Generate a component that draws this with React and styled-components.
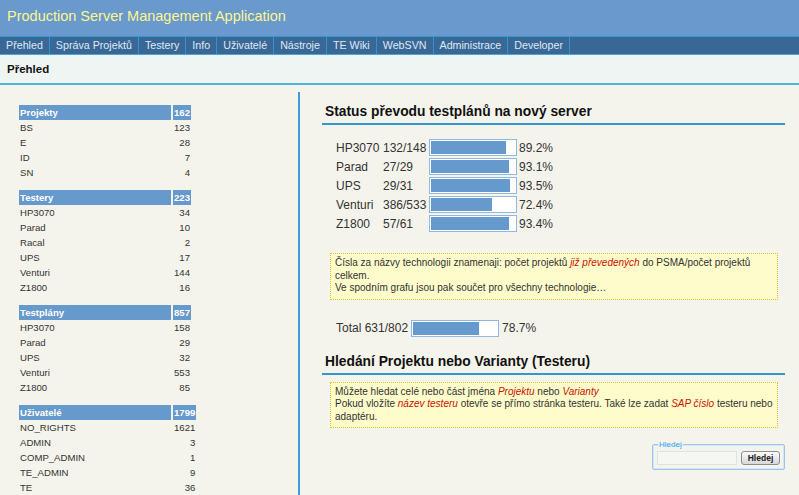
import styled, { createGlobalStyle } from "styled-components";

const GlobalStyle = createGlobalStyle`
  html, body {
    margin: 0;
    padding: 0;
  }
  body {
    background: #f5f4ec;
    font-family: "Liberation Sans", Arial, sans-serif;
    color: #333;
  }
`;

const menu = [
  "Přehled",
  "Správa Projektů",
  "Testery",
  "Info",
  "Uživatelé",
  "Nástroje",
  "TE Wiki",
  "WebSVN",
  "Administrace",
  "Developer",
];

const stats = [
  {
    title: "Projekty",
    total: 162,
    rows: [["BS", 123], ["E", 28], ["ID", 7], ["SN", 4]],
  },
  {
    title: "Testery",
    total: 223,
    rows: [["HP3070", 34], ["Parad", 10], ["Racal", 2], ["UPS", 17], ["Venturi", 144], ["Z1800", 16]],
  },
  {
    title: "Testplány",
    total: 857,
    rows: [["HP3070", 158], ["Parad", 29], ["UPS", 32], ["Venturi", 553], ["Z1800", 85]],
  },
  {
    title: "Uživatelé",
    total: 1799,
    rows: [["NO_RIGHTS", 1621], ["ADMIN", 3], ["COMP_ADMIN", 1], ["TE_ADMIN", 9], ["TE", 36]],
  },
];

const progress = [
  ["HP3070", "132/148", 89.2],
  ["Parad", "27/29", 93.1],
  ["UPS", "29/31", 93.5],
  ["Venturi", "386/533", 72.4],
  ["Z1800", "57/61", 93.4],
];

const ProgressBar = ({ value }) => (
  <Bar>
    <Fill style={{ width: `${value}%` }} />
  </Bar>
);

const App = () => {
  return (
    <Page>
      <GlobalStyle />
      <Header>
        <Title>Production Server Management Application</Title>
      </Header>
      <Nav>
        {menu.map((item) => (
          <NavItem key={item}>{item}</NavItem>
        ))}
      </Nav>
      <SubHeader>Přehled</SubHeader>

      <Main>
        <LeftColumn>
          {stats.map((table) => (
            <StatTable key={table.title}>
              <HeadCell>{table.title}</HeadCell>
              <HeadCell $num>{table.total}</HeadCell>
              {table.rows.map(([name, count]) => (
                <Row key={name}>
                  <Cell>{name}</Cell>
                  <Cell $num>{count}</Cell>
                </Row>
              ))}
            </StatTable>
          ))}
        </LeftColumn>

        <RightColumn>
          <SectionTitle>Status převodu testplánů na nový server</SectionTitle>
          <ProgressGrid>
            {progress.map(([name, ratio, pct]) => (
              <Row key={name}>
                <span>{name}</span>
                <span>{ratio}</span>
                <ProgressBar value={pct} />
                <Pct>{pct}%</Pct>
              </Row>
            ))}
          </ProgressGrid>

          <Note $top={21}>
            Čísla za názvy technologii znamenaji: počet projektů <Em>již převedených</Em> do
            PSMA/počet projektů celkem.
            <br />
            Ve spodním grafu jsou pak součet pro všechny technologie…
          </Note>

          <TotalRow>
            <span>Total 631/802</span>
            <ProgressBar value={78.7} />
            <span>78.7%</span>
          </TotalRow>

          <SectionTitle $top={17}>Hledání Projektu nebo Varianty (Testeru)</SectionTitle>
          <Note $top={7}>
            Můžete hledat celé nebo část jména <Em>Projektu</Em> nebo <Em>Varianty</Em>
            <br />
            Pokud vložíte <Em>název testeru</Em> otevře se přímo stránka testeru. Také lze zadat{" "}
            <Em>SAP číslo</Em> testeru nebo adaptéru.
          </Note>

          <SearchWrap>
            <SearchBox>
              <Legend>Hledej</Legend>
              <SearchInput type="text" />
              <SearchButton type="button">Hledej</SearchButton>
            </SearchBox>
          </SearchWrap>
        </RightColumn>
      </Main>
    </Page>
  );
};

export default App;

const Page = styled.div`
  display: flex;
  flex-direction: column;
  min-height: 100vh;
`;

const Header = styled.div`
  height: 36px;
  background: #6999cd;
  display: flex;
  align-items: center;
  padding-left: 7px;
`;

const Title = styled.div`
  color: #fbf68e;
  font-size: 14.5px;
  margin-top: -4px;
`;

const Nav = styled.div`
  display: flex;
  height: 17px;
  background: #3a6896;
  border-top: 1px solid #3399cc;
  border-bottom: 1px solid #4aa6d6;
`;

const NavItem = styled.div`
  padding: 0 6px;
  border-right: 1px solid #2f95cc;
  color: #dde9f5;
  font-size: 10.7px;
  line-height: 17px;
  white-space: nowrap;
`;

const SubHeader = styled.div`
  height: 28px;
  line-height: 28px;
  padding-left: 7px;
  background: #eef5f2;
  border-bottom: 2px solid #4fb3e0;
  font-size: 11.5px;
  font-weight: bold;
  color: #111;
`;

const Main = styled.div`
  flex: 1;
  display: flex;
  padding-top: 7px;
`;

const LeftColumn = styled.div`
  width: 300px;
  flex-shrink: 0;
  box-sizing: border-box;
  padding: 13px 0 0 19px;
  border-right: 2px solid #3a9fdd;
`;

const StatTable = styled.div`
  display: grid;
  grid-template-columns: 152px auto;
  grid-auto-rows: 15px;
  column-gap: 2px;
  justify-content: start;
  margin-bottom: 10px;
  font-size: 9.6px;
  line-height: 15px;
`;

const Row = styled.div`
  display: contents;
`;

const HeadCell = styled.div`
  background: #6699cc;
  color: #fff;
  font-weight: bold;
  padding: 0 1px;
  text-align: ${(p) => (p.$num ? "right" : "left")};
`;

const Cell = styled.div`
  padding: 0 1px;
  color: #333;
  text-align: ${(p) => (p.$num ? "right" : "left")};
`;

const RightColumn = styled.div`
  flex: 1;
  padding: 12px 14px 0 22px;
`;

const SectionTitle = styled.h2`
  margin: ${(p) => p.$top || 0}px 0 0;
  padding: 0 3px 3px;
  font-size: 13.8px;
  line-height: 16px;
  font-weight: bold;
  color: #111;
  border-bottom: 2px solid #3399cc;
`;

const ProgressGrid = styled.div`
  display: grid;
  grid-template-columns: 47px 46px 88px auto;
  grid-auto-rows: 17px;
  row-gap: 2px;
  align-items: center;
  justify-content: start;
  margin: 14px 0 0 14px;
  font-size: 12px;
  color: #333;
`;

const Bar = styled.div`
  width: 88px;
  height: 17px;
  box-sizing: border-box;
  border: 1px solid #8fb9e3;
  padding: 1px;
  background: #fff;
`;

const Fill = styled.div`
  height: 100%;
  background: #6699cc;
`;

const Pct = styled.span`
  padding-left: 2px;
`;

const Note = styled.div`
  margin: ${(p) => p.$top}px 7px 0 8px;
  padding: 3px 4px 4px;
  border: 1px dotted #e2c13a;
  background: #fdfcca;
  font-size: 10px;
  line-height: 12.5px;
  color: #333;
`;

const Em = styled.span`
  color: #cc1100;
  font-style: italic;
`;

const TotalRow = styled.div`
  display: flex;
  align-items: center;
  gap: 3px;
  margin: 20px 0 0 14px;
  font-size: 12px;
  color: #333;
`;

const SearchWrap = styled.div`
  display: flex;
  justify-content: flex-end;
  margin-top: 12px;
`;

const SearchBox = styled.fieldset`
  display: flex;
  align-items: center;
  gap: 4px;
  margin: 0;
  padding: 2px 4px 4px 4px;
  border: 1px solid #9fc4ea;
  border-radius: 2px;
  box-shadow: inset 0 0 0 1px #d4e5f5;
  background: #f2f5ef;
`;

const Legend = styled.legend`
  padding: 0 1px;
  margin-left: 1px;
  font-size: 8px;
  color: #33a6ea;
`;

const SearchInput = styled.input`
  width: 80px;
  height: 14px;
  box-sizing: border-box;
  margin: 0;
  border: 1px solid #dfe3dc;
  background: #f5f7f2;
  font-size: 9px;
`;

const SearchButton = styled.button`
  width: 39px;
  height: 14px;
  box-sizing: border-box;
  margin: 0;
  padding: 0;
  border: 1px solid #8e8e8e;
  border-radius: 3px;
  background: linear-gradient(#fbfbfb, #d8d8d8);
  font-family: "Liberation Sans", Arial, sans-serif;
  font-size: 8.5px;
  font-weight: bold;
  color: #222;
`;
